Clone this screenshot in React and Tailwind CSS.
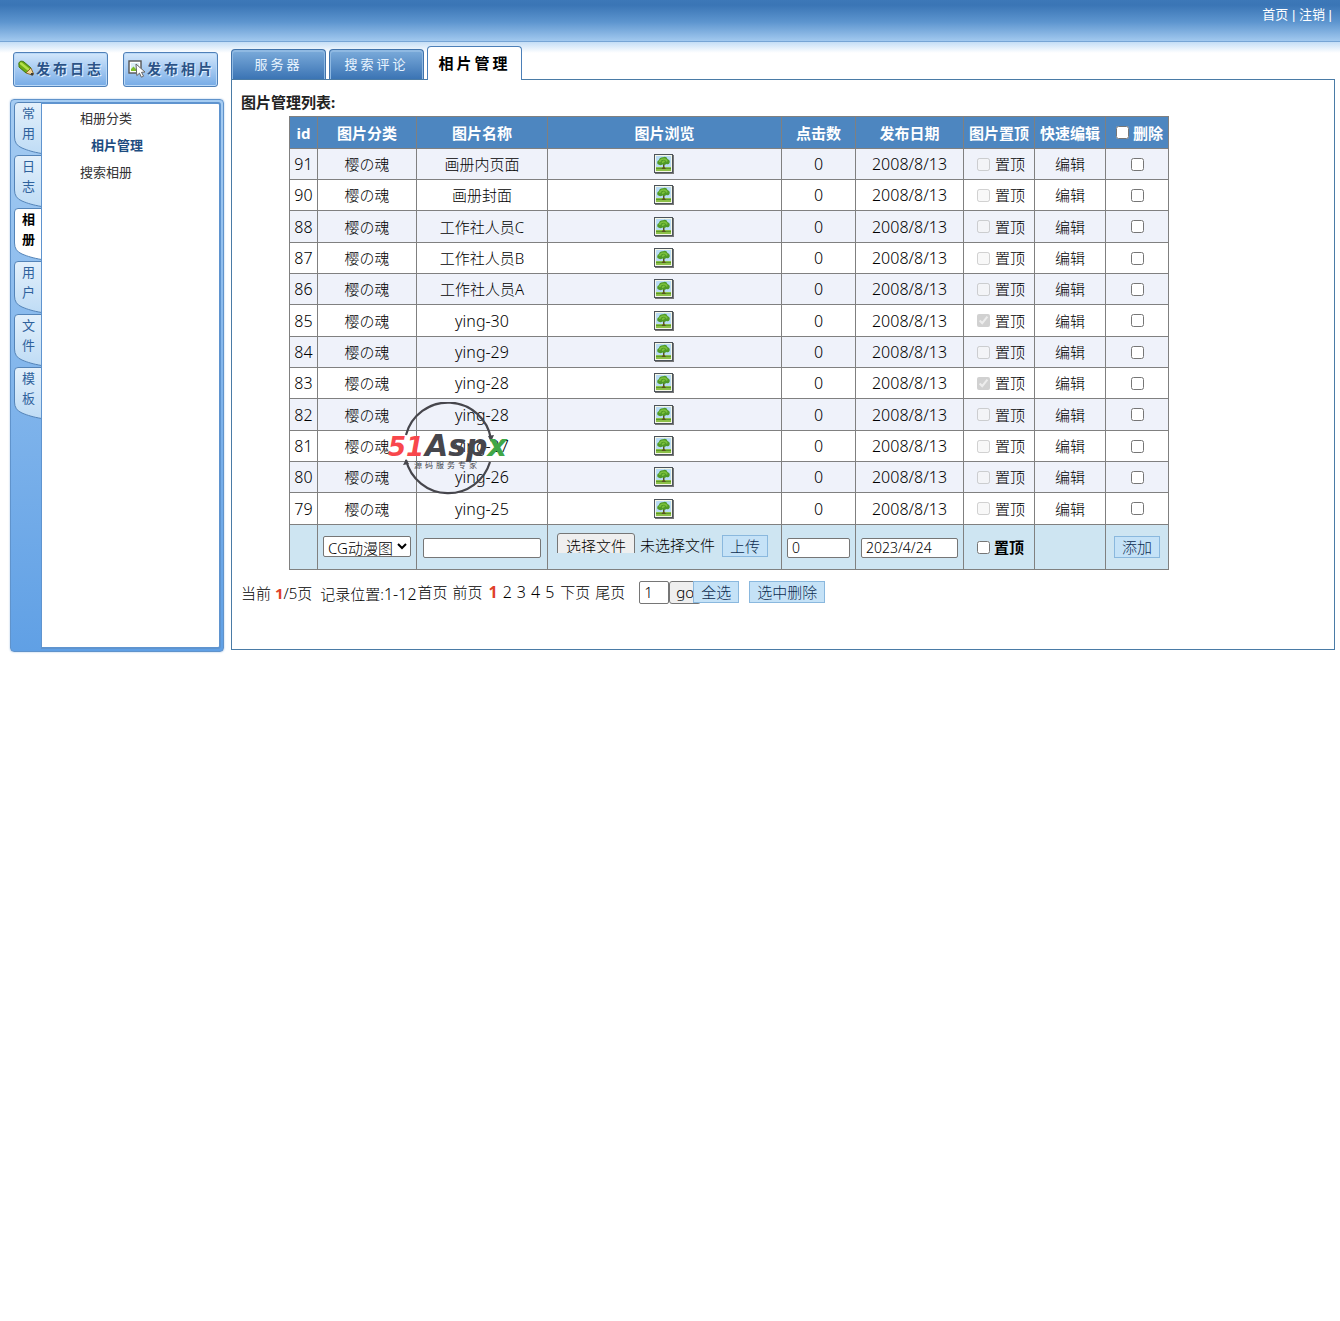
import { useState } from "react";

const photos = [
  { id: 91, name: "画册内页面", top: false },
  { id: 90, name: "画册封面", top: false },
  { id: 88, name: "工作社人员C", top: false },
  { id: 87, name: "工作社人员B", top: false },
  { id: 86, name: "工作社人员A", top: false },
  { id: 85, name: "ying-30", top: true },
  { id: 84, name: "ying-29", top: false },
  { id: 83, name: "ying-28", top: true },
  { id: 82, name: "ying-28", top: false },
  { id: 81, name: "ying-27", top: false },
  { id: 80, name: "ying-26", top: false },
  { id: 79, name: "ying-25", top: false },
];

const sideTabs = ["常用", "日志", "相册", "用户", "文件", "模板"];

const cell = "border border-[#808080] p-0 text-center";
const smallButton =
  "h-[22px] border border-[#8ab8de] bg-[#c5e2f7] px-[7px] text-[15px] leading-5 font-light text-[#0c2c50]";
const textInput =
  "h-5 rounded-xs border border-[#767676] bg-white px-1 text-sm font-light text-black";

const PencilIcon = () => (
  <svg width="17" height="17" viewBox="0 0 17 17" aria-hidden="true">
    <path d="M1 5 C0 2 3 0 6 2 L13 8 L8 13 L1 7 Z" fill="#6cab16" stroke="#41760f" />
    <path d="M3 3.5 L11 10" stroke="#b4e04c" strokeWidth="2.4" strokeLinecap="round" />
    <path d="M13 8 L15.5 13.8 Q15.5 15 14 15 L8 13 Z" fill="#f3d69a" stroke="#8a6a2c" />
    <path d="M13 13 L15.5 13 L15 15.5 L12.5 15 Z" fill="#3b3b3b" />
  </svg>
);

const PictureIcon = () => (
  <svg width="18" height="18" viewBox="0 0 18 18" aria-hidden="true">
    <rect x="1" y="1" width="12" height="12" fill="#fff" stroke="#555" strokeWidth="1.4" />
    <rect x="3" y="3" width="8" height="8" fill="#dceef7" />
    <path d="M3 9 L5.5 6.5 L8 9 L11 7 V11 H3 Z" fill="#7fbf2c" />
    <path d="M8 4 L17 12 L13.5 12.3 L15.6 16.2 L13.4 17.2 L11.5 13.2 L8.8 15.6 Z" fill="#fff" stroke="#666" />
  </svg>
);

const TreeIcon = () => (
  <svg width="20" height="20" viewBox="0 0 20 20" className="block" aria-hidden="true">
    <rect x="1" y="1" width="19" height="19" fill="#777" />
    <rect x="0.5" y="0.5" width="18" height="18" fill="#f4f7e8" stroke="#4d545b" />
    <rect x="2" y="2" width="15" height="12" fill="#b9dcf5" />
    <rect x="2" y="13" width="15" height="4" fill="#8cc048" />
    <path d="M2 14.5 H17" stroke="#5a9a28" />
    <path d="M9 8 V13 L7.5 15 H12 L10.5 13 V8 Z" fill="#5a5420" />
    <path d="M3.5 10 Q2.5 7 5 6 Q5.5 3 9 3.2 Q12.5 2 13.5 5 Q16.5 6 15.5 9 Q14.5 11 12.5 10 L10.5 11 L8.500 10.5 Q6 12 3.5 10 Z" fill="#4f9a28" />
    <path d="M5.5 8 Q6.5 5 9.5 5 Q12 4.6 13 7.5 M8 8.5 L10.5 7" fill="none" stroke="#7cc23c" strokeWidth="1.6" />
  </svg>
);

const SideTabShape = ({ active }) => (
  <svg width="28" height="53" viewBox="0 0 28 53" className="absolute inset-0" aria-hidden="true">
    <defs>
      <linearGradient id="sideTab" x1="0" y1="0" x2="0" y2="1">
        <stop offset="0" stopColor="#e3f0fb" />
        <stop offset="1" stopColor="#bfdcf5" />
      </linearGradient>
    </defs>
    <path
      d="M28.5 .5 H5 Q1.5 .5 1.5 4 V35 Q1.5 43 9 46 C15 48.5 20 50 28.5 51.5"
      fill={active ? "#fff" : "url(#sideTab)"}
      stroke="#5484b8"
    />
  </svg>
);

const Watermark = () => (
  <svg
    width="126"
    height="94"
    viewBox="0 0 126 94"
    className="pointer-events-none absolute top-[286px] left-[98px]"
    aria-hidden="true"
  >
    <path d="M19 33 A43.5 43.5 0 0 1 104 37 M103 60 A43.5 43.5 0 0 1 19 58" fill="none" stroke="#46464c" strokeWidth="2.2" />
    <path d="M101 34 L107 33 L104 40 Z M16 63 L19 57 L22 62 Z" fill="#46464c" />
    <g fontFamily="'DejaVu Sans', sans-serif" fontWeight="bold" fontStyle="italic">
      <text x="1" y="54" fontSize="26" fill="#f8474c">51</text>
      <text x="38" y="54" fontSize="30" fill="#46464c">
        Asp<tspan fill="#3fa648">x</tspan>
      </text>
    </g>
    <text x="27" y="66" fontSize="8" letterSpacing="3" fill="#46464c" fontFamily="'Noto Sans CJK SC', sans-serif">
      源码服务专家
    </text>
  </svg>
);

const PublishButton = ({ icon, children }) => (
  <button
    type="button"
    className="flex h-[35px] w-[95px] items-center gap-px rounded-[3px] border border-[#4f80b8] bg-linear-to-b from-[#d3e7fb] to-[#76abe6] pb-[2px] pl-1 text-sm font-bold tracking-[3px] whitespace-nowrap text-[#2b5388] shadow-[inset_0_0_0_1px_#b9d8f7] text-shadow-[1px_1px_0_#e5f2fd]"
  >
    <span className="shrink-0">{icon}</span>
    {children}
  </button>
);

const Sidebar = ({ active, onSelect }) => (
  <aside className="mt-3 flex flex-1 rounded-[4px] border border-[#6093cb] bg-linear-to-b from-[#a5ccf2] to-[#60a0e5] p-[2px] shadow-[0_0_2px_#9dbfe5]">
    <nav className="w-7">
      {sideTabs.map((tab) => (
        <button
          key={tab}
          type="button"
          onClick={() => onSelect(tab)}
          className={`relative block h-[53px] w-7 ${
            tab === active ? "font-bold text-black" : "text-[#2f629c]"
          }`}
        >
          <SideTabShape active={tab === active} />
          <span className="relative -mt-3 ml-[9px] block w-[13px] text-[13px] leading-5">{tab}</span>
        </button>
      ))}
    </nav>
    <ul className="flex-1 rounded-r-[3px] border-2 border-l border-[#5f94cf] bg-white pt-px text-[13px] leading-[27px] text-[#333]">
      <li className="pl-[38px]"><a href="#category">相册分类</a></li>
      <li className="pl-[49px]"><a href="#photos" className="font-bold text-[#1d4c80]">相片管理</a></li>
      <li className="pl-[38px]"><a href="#search">搜索相册</a></li>
    </ul>
  </aside>
);

const Tabs = () => (
  <nav className="flex h-[33px] items-end whitespace-nowrap">
    <a href="#server" className="mr-[3px] flex h-[30px] w-[95px] items-center justify-center rounded-t-[4px] border border-b-0 border-[#4173ab] bg-linear-to-b from-[#7cacdb] to-[#3b74b4] text-[13px] tracking-[3px] text-[#e8f4ff] shadow-[inset_0_1px_0_1px_#8fb9e2]">
      服务器
    </a>
    <a href="#comments" className="mr-[3px] flex h-[30px] w-[95px] items-center justify-center rounded-t-[4px] border border-b-0 border-[#4173ab] bg-linear-to-b from-[#7cacdb] to-[#3b74b4] text-[13px] tracking-[3px] text-[#e8f4ff] shadow-[inset_0_1px_0_1px_#8fb9e2]">
      搜索评论
    </a>
    <a href="#photos" className="relative -mb-px flex h-[34px] w-[95px] items-center justify-center rounded-t-[4px] border border-b-0 border-[#4b7fb8] bg-white text-[15px] font-bold tracking-[3px] text-black">
      相片管理
    </a>
  </nav>
);

const PhotoRow = ({ photo, checked, onCheck }) => (
  <tr className="h-[31px] font-light odd:bg-[#eff2fa] nth-[3n]:h-8">
    <td className={`${cell} text-base`}>{photo.id}</td>
    <td className={cell}>樱の魂</td>
    <td className={`${cell} ${photo.name.startsWith("ying") ? "text-base" : ""}`}>{photo.name}</td>
    <td className={cell}>
      <a href="#view" aria-label="图片浏览" className="mx-auto block w-[22px]"><TreeIcon /></a>
    </td>
    <td className={`${cell} text-base`}>0</td>
    <td className={`${cell} text-base`}>2008/8/13</td>
    <td className={cell}>
      <label className="flex items-center gap-[5px] pl-[13px]">
        <input type="checkbox" disabled defaultChecked={photo.top} />
        置顶
      </label>
    </td>
    <td className={cell}><a href="#edit">编辑</a></td>
    <td className={cell}>
      <input
        type="checkbox"
        aria-label={`删除 ${photo.id}`}
        className="mx-auto block"
        checked={checked}
        onChange={onCheck}
      />
    </td>
  </tr>
);

const PhotoTable = ({ selected, onToggle, onToggleAll }) => (
  <table className="w-[880px] table-fixed border-collapse text-[15px] leading-5 text-black">
    <colgroup>
      <col className="w-[28px]" />
      <col className="w-[99px]" />
      <col className="w-[131px]" />
      <col className="w-[234px]" />
      <col className="w-[74px]" />
      <col className="w-[108px]" />
      <col className="w-[71px]" />
      <col className="w-[71px]" />
      <col className="w-[63px]" />
    </colgroup>
    <thead>
      <tr className="h-8 bg-[#4d86c0] whitespace-nowrap text-white">
        <th className={cell}>id</th>
        <th className={cell}>图片分类</th>
        <th className={cell}>图片名称</th>
        <th className={cell}>图片浏览</th>
        <th className={cell}>点击数</th>
        <th className={cell}>发布日期</th>
        <th className={cell}>图片置顶</th>
        <th className={cell}>快速编辑</th>
        <th className={cell}>
          <label className="flex items-center gap-1 pl-[10px]">
            <input type="checkbox" checked={selected.length === photos.length} onChange={onToggleAll} />
            删除
          </label>
        </th>
      </tr>
    </thead>
    <tbody>
      {photos.map((photo) => (
        <PhotoRow
          key={photo.id}
          photo={photo}
          checked={selected.includes(photo.id)}
          onCheck={() => onToggle(photo.id)}
        />
      ))}
    </tbody>
    <tfoot>
      <tr className="h-[45px] bg-[#cee5f2]">
        <td className={cell}></td>
        <td className={cell}>
          <select
            aria-label="图片分类"
            className="h-[21px] w-[88px] rounded-xs border border-[#767676] bg-white text-[15px] leading-4 font-light text-black"
          >
            <option>CG动漫图</option>
          </select>
        </td>
        <td className={cell}>
          <input aria-label="图片名称" className={`${textInput} w-[118px]`} />
        </td>
        <td className={cell}>
          <div className="flex items-start pb-1 pl-[9px]">
            <label className="flex h-5 overflow-hidden font-light text-black">
              <input type="file" className="sr-only" />
              <span className="mr-[5px] h-6 rounded-[3px] border border-[#767676] bg-[#efefef] px-2 leading-6">选择文件</span>
              <span className="leading-6">未选择文件</span>
            </label>
            <button type="button" className={`${smallButton} mt-[2px] ml-[7px]`}>上传</button>
          </div>
        </td>
        <td className={cell}>
          <input aria-label="点击数" defaultValue="0" className={`${textInput} w-[63px]`} />
        </td>
        <td className={cell}>
          <input aria-label="发布日期" defaultValue="2023/4/24" className={`${textInput} w-[97px]`} />
        </td>
        <td className={cell}>
          <label className="flex items-center gap-1 pl-[13px] font-bold">
            <input type="checkbox" />
            置顶
          </label>
        </td>
        <td className={cell}></td>
        <td className={cell}>
          <button type="button" className={smallButton}>添加</button>
        </td>
      </tr>
    </tfoot>
  </table>
);

const Pager = ({ onSelectAll, onClear }) => (
  <div className="mt-[10px] flex h-6 items-center text-[15px] font-light whitespace-nowrap text-black">
    <p className="pt-[3px]">
      当前 <b className="font-bold text-[#e0402a]">1</b>/5页
    </p>
    <p className="pt-[3px] pl-2">
      记录位置:<span className="text-base">1-12</span>
    </p>
    <nav className="ml-px flex items-baseline gap-[5px] text-base">
      <a href="#first" className="text-[15px]">首页</a>
      <a href="#prev" className="text-[15px]">前页</a>
      <b className="pl-px font-bold text-[#e0402a]">1</b>
      <a href="#2">2</a>
      <a href="#3">3</a>
      <a href="#4">4</a>
      <a href="#5">5</a>
      <a href="#next" className="pl-px text-[15px]">下页</a>
      <a href="#last" className="text-[15px]">尾页</a>
    </nav>
    <input
      aria-label="页码"
      defaultValue="1"
      className="ml-[14px] h-[23px] w-[30px] rounded-xs border border-[#767676] px-1 text-[15px] text-black"
    />
    <button type="button" className="h-[23px] w-8 rounded-[3px] border border-[#767676] bg-[#efefef] pl-[6px] text-left text-[15px] leading-5 text-black">
      go
    </button>
    <button type="button" onClick={onSelectAll} className={`${smallButton} relative -ml-2`}>全选</button>
    <button type="button" onClick={onClear} className={`${smallButton} ml-[10px]`}>选中删除</button>
  </div>
);

export default function App() {
  const [activeTab, setActiveTab] = useState("相册");
  const [selected, setSelected] = useState([]);

  const toggle = (id) =>
    setSelected((prev) => (prev.includes(id) ? prev.filter((x) => x !== id) : [...prev, id]));
  const selectAll = () => setSelected(photos.map((p) => p.id));
  const toggleAll = () => (selected.length === photos.length ? setSelected([]) : selectAll());

  return (
    <div className="min-h-screen bg-white bg-[linear-gradient(#3d78b8_0px,#3a75b5_5px,#5d95cf_22px,#a2c9ef_41px,#77a5d5_41px,#77a5d5_42px,#c5def6_42px,#fff_53px)] font-['Noto_Sans','Noto_Sans_CJK_SC',sans-serif]">
      <header className="flex h-[46px] justify-end pt-[5px] pr-2 font-['Liberation_Sans','Noto_Sans_CJK_SC',sans-serif] text-[13px] leading-5 text-white">
        <p>
          <a href="#home">首页</a> | <a href="#logout">注销</a> |
        </p>
      </header>
      <div className="flex pr-[5px] pl-[10px]">
        <div className="flex w-[214px] shrink-0 flex-col pt-[6px]">
          <div className="flex gap-[15px] pl-[3px]">
            <PublishButton icon={<PencilIcon />}>发布日志</PublishButton>
            <PublishButton icon={<PictureIcon />}>发布相片</PublishButton>
          </div>
          <Sidebar active={activeTab} onSelect={setActiveTab} />
        </div>
        <main className="mb-[2px] ml-[7px] min-w-0 flex-1">
          <Tabs />
          <section className="border border-[#4a7ba6] px-[9px] pt-3 pb-[45px]">
            <h1 className="text-[15px] leading-5 font-bold text-[#222]">图片管理列表:</h1>
            <div className="relative mt-1 ml-12 w-fit">
              <PhotoTable selected={selected} onToggle={toggle} onToggleAll={toggleAll} />
              <Watermark />
            </div>
            <Pager onSelectAll={selectAll} onClear={() => setSelected([])} />
          </section>
        </main>
      </div>
    </div>
  );
}
